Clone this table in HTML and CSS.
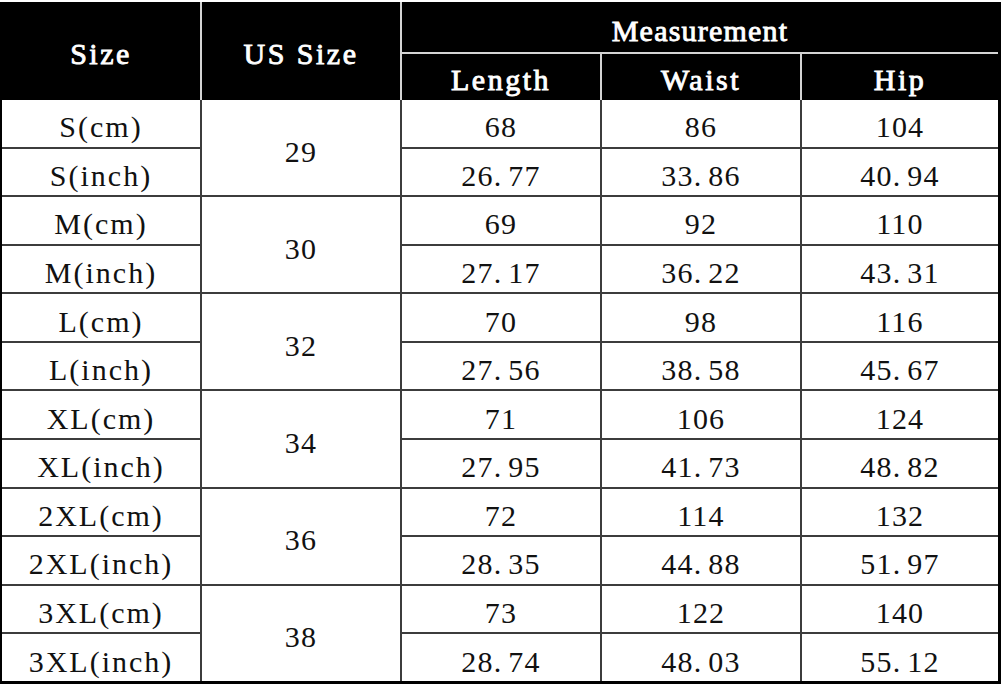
FILE: index.html
```html
<!DOCTYPE html>
<html>
<head>
<meta charset="utf-8">
<link rel="stylesheet" href="styles.css">
</head>
<body>
<div class="sheet">
  <div class="head">
    <div class="hc span-rows">Size</div>
    <div class="hc span-rows">US Size</div>
    <div class="hc span-cols measure">Measurement</div>
    <div class="hc">Length</div>
    <div class="hc">Waist</div>
    <div class="hc">Hip</div>
  </div>
  <div class="body">
    <div class="c lab">S(cm)</div><div class="c us">29</div><div class="c">68</div><div class="c">86</div><div class="c">104</div>
    <div class="c lab">S(inch)</div><div class="c">26<span class="d">.</span>77</div><div class="c">33<span class="d">.</span>86</div><div class="c">40<span class="d">.</span>94</div>
    <div class="c lab">M(cm)</div><div class="c us">30</div><div class="c">69</div><div class="c">92</div><div class="c">110</div>
    <div class="c lab">M(inch)</div><div class="c">27<span class="d">.</span>17</div><div class="c">36<span class="d">.</span>22</div><div class="c">43<span class="d">.</span>31</div>
    <div class="c lab">L(cm)</div><div class="c us">32</div><div class="c">70</div><div class="c">98</div><div class="c">116</div>
    <div class="c lab">L(inch)</div><div class="c">27<span class="d">.</span>56</div><div class="c">38<span class="d">.</span>58</div><div class="c">45<span class="d">.</span>67</div>
    <div class="c lab">XL(cm)</div><div class="c us">34</div><div class="c">71</div><div class="c">106</div><div class="c">124</div>
    <div class="c lab">XL(inch)</div><div class="c">27<span class="d">.</span>95</div><div class="c">41<span class="d">.</span>73</div><div class="c">48<span class="d">.</span>82</div>
    <div class="c lab">2XL(cm)</div><div class="c us">36</div><div class="c">72</div><div class="c">114</div><div class="c">132</div>
    <div class="c lab">2XL(inch)</div><div class="c">28<span class="d">.</span>35</div><div class="c">44<span class="d">.</span>88</div><div class="c">51<span class="d">.</span>97</div>
    <div class="c lab">3XL(cm)</div><div class="c us">38</div><div class="c">73</div><div class="c">122</div><div class="c">140</div>
    <div class="c lab">3XL(inch)</div><div class="c">28<span class="d">.</span>74</div><div class="c">48<span class="d">.</span>03</div><div class="c">55<span class="d">.</span>12</div>
  </div>
</div>
</body>
</html>
```

FILE: styles.css
```css
html, body {
  margin: 0;
  padding: 0;
  background: #ffffff;
}

.sheet {
  width: 1001px;
  box-sizing: border-box;
  margin-top: 2px;
  border-left: 2px solid #000;
  border-right: 3px solid #000;
  border-bottom: 3px solid #000;
  font-family: "Liberation Serif", "Times New Roman", serif;
  font-size: 30px;
}

.head {
  display: grid;
  grid-template-columns: 198px 198px 198px 198px 196px;
  grid-template-rows: 50px 46px;
  column-gap: 2px;
  row-gap: 2px;
  background: #d4d4d4;
}

.hc {
  background: #000;
  color: #fff;
  font-weight: normal;
  -webkit-text-stroke: 0.9px #fff;
  letter-spacing: 2.5px;
  display: flex;
  align-items: center;
  justify-content: center;
  padding-top: 6px;
  box-sizing: border-box;
}

.span-rows {
  grid-row: span 2;
}

.span-cols {
  grid-column: span 3;
}

.measure {
  letter-spacing: 1.2px;
  padding-top: 8px;
}

.body {
  display: grid;
  grid-template-columns: 198px 198px 198px 198px 196px;
  grid-template-rows: repeat(12, 46.58px);
  gap: 2px;
  background: #3c3c3c;
}

.c {
  background: #fff;
  color: #111;
  letter-spacing: 1.2px;
  display: flex;
  align-items: center;
  justify-content: center;
  padding-top: 8px;
  box-sizing: border-box;
}

.lab {
  letter-spacing: 2px;
}

.us {
  grid-row: span 2;
}

.d {
  margin-right: 6px;
}
```
